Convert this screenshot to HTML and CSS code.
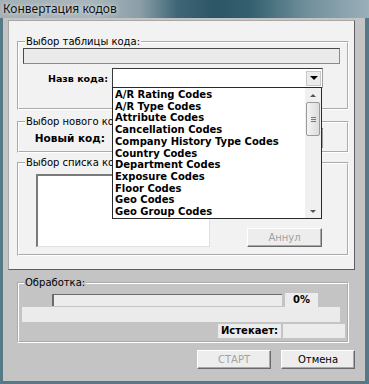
FILE: index.html
```html
<!DOCTYPE html>
<html lang="ru">
<head>
    <meta charset="UTF-8">
    <meta name="viewport" content="width=device-width, initial-scale=1.0">
    <title>Конвертация кодов</title>
    <link rel="stylesheet" href="styles.css">
</head>
<body>
    <div class="window">
        <div class="titlebar">Конвертация кодов</div>
        <div class="client">
            <div class="top-panel">
                <fieldset class="group group-table">
                    <legend>Выбор таблицы кода:</legend>
                    <div class="field-wide"></div>
                    <div class="row">
                        <label class="row-label label-name">Назв кода:</label>
                        <div class="combo"><span class="combo-btn"></span></div>
                    </div>
                </fieldset>
                <fieldset class="group group-new">
                    <legend>Выбор нового кода:</legend>
                    <div class="row">
                        <label class="row-label label-new">Новый код:</label>
                        <div class="combo"><span class="combo-btn"></span></div>
                    </div>
                </fieldset>
                <fieldset class="group group-list">
                    <legend>Выбор списка кодов:</legend>
                    <div class="list-row">
                        <div class="listbox"></div>
                        <button class="btn btn-cancel" disabled>Аннул</button>
                    </div>
                </fieldset>
            </div>

            <fieldset class="process">
                <legend>Обработка:</legend>
                <div class="progress-row">
                    <div class="progress"></div>
                    <div class="percent">0%</div>
                </div>
                <div class="status"></div>
                <div class="expire-row">
                    <div class="expire-label">Истекает:</div>
                    <div class="expire-value"></div>
                </div>
            </fieldset>

            <div class="actions">
                <button class="btn" disabled>СТАРТ</button>
                <button class="btn">Отмена</button>
            </div>
        </div>

        <!-- открытый список кодов -->
        <div class="dropdown">
            <ul class="options">
                <li>A/R Rating Codes</li>
                <li>A/R Type Codes</li>
                <li>Attribute Codes</li>
                <li>Cancellation Codes</li>
                <li>Company History Type Codes</li>
                <li>Country Codes</li>
                <li>Department Codes</li>
                <li>Exposure Codes</li>
                <li>Floor Codes</li>
                <li>Geo Codes</li>
                <li>Geo Group Codes</li>
            </ul>
            <div class="scrollbar">
                <span class="arrow arrow-up"></span>
                <span class="thumb"><span class="grip"></span></span>
                <span class="track"></span>
                <span class="arrow arrow-down"></span>
            </div>
        </div>
    </div>
</body>
</html>
```

FILE: styles.css
```css
/* окно диалога */
body {
    margin: 0;
    font-family: "DejaVu Sans", Verdana, sans-serif;
    font-size: 10px;
    color: #000;
    background: #fff;
}

.window {
    position: relative;
    width: 369px;
    height: 384px;
    display: flex;
    flex-direction: column;
    overflow: hidden;
}

.titlebar {
    height: 18px;
    line-height: 18px;
    padding-left: 3px;
    font-family: "Noto Sans", sans-serif;
    font-size: 12px;
    color: #111;
    text-shadow: 0 0 4px rgba(255, 255, 255, 0.9);
    background: linear-gradient(90deg, #a3b1b7 0%, #a9b6bc 25%, #8a9ea7 38%, #3f6676 48%, #2c5566 58%, #34606f 68%, #6d8c99 82%, #9bb0b9 100%);
}

.client {
    flex: 1;
    display: flex;
    flex-direction: column;
    background: #c4c4c4;
    border: solid #567987;
    border-width: 0 4px 3px 3px;
    padding: 2px 10px 0 5px;
}

/* верхняя панель */
.top-panel {
    background: #f2f2f2;
    border: 1px solid;
    border-color: #a8a8a8 #5e5e5e #5e5e5e #a8a8a8;
    padding: 14px 5px 13px 8px;
}

.group {
    margin: 0;
    padding: 0 7px 20px 4px;
    border: 2px groove #fff;
    min-width: 0;
}

.group legend,
.process legend {
    margin-left: 2px;
    padding: 0 1px;
    line-height: 13px;
}

.group-new {
    margin-top: 5px;
    padding-bottom: 3px;
}

.group-list {
    margin-top: 3px;
    padding-bottom: 7px;
}

.field-wide {
    height: 14px;
    background: #ebebeb;
    border: 1px solid;
    border-color: #4a4a4a #8a8a8a #8a8a8a #4a4a4a;
}

.row {
    display: flex;
    align-items: center;
    gap: 4px;
    margin-top: 4px;
}

.group-new .row {
    margin-top: 0;
}

.row-label {
    width: 85px;
    text-align: right;
    font-weight: bold;
}

.label-name {
    font-size: 9.5px;
}

.label-new {
    width: 82px;
    padding-right: 3px;
    font-size: 10.5px;
}

.combo {
    position: relative;
    width: 208px;
    height: 18px;
    background: #fff;
    border: 1px solid;
    border-color: #3a3a3a #a0a0a0 #a0a0a0 #3a3a3a;
    display: flex;
    justify-content: flex-end;
    align-items: center;
    padding-right: 1px;
}

.combo-btn {
    width: 15px;
    height: 15px;
    background: #ececec;
    border: 1px solid #c8c8c8;
    box-sizing: border-box;
    display: flex;
    align-items: center;
    justify-content: center;
}

.combo-btn::after {
    content: "";
    border-left: 4px solid transparent;
    border-right: 4px solid transparent;
    border-top: 4px solid #000;
}

.list-row {
    display: flex;
    align-items: flex-end;
    margin: 5px 0 0 13px;
}

.listbox {
    width: 171px;
    height: 70px;
    align-self: flex-start;
    background: #fff;
    border-style: solid;
    border-width: 2px 1px 1px 2px;
    border-color: #7a7a7a #e0e0e0 #e0e0e0 #7a7a7a;
}

/* кнопки */
.btn {
    height: 19px;
    padding: 0;
    font-family: "DejaVu Sans", Verdana, sans-serif;
    font-size: 10px;
    color: #000;
    background: #ededed;
    border: 1px solid;
    border-color: #fff #6a6a6a #6a6a6a #fff;
    box-shadow: inset -1px -1px 0 #a8a8a8;
}

.btn:disabled {
    color: #a2a2a2;
}

.btn-cancel {
    width: 75px;
    margin-left: 37px;
}

/* обработка */
.process {
    margin: 6px 6px 0 9px;
    padding: 0 2px 3px 3px;
    border: 2px groove #fff;
    min-width: 0;
}

.progress-row {
    display: flex;
    align-items: center;
    gap: 3px;
    margin-top: 4px;
    height: 14px;
}

.progress {
    width: 228px;
    height: 11px;
    margin-left: 30px;
    background: #ececec;
    border-style: solid;
    border-width: 1px 0 0 2px;
    border-color: #6b6b6b;
}

.percent {
    width: 33px;
    height: 14px;
    line-height: 14px;
    text-align: center;
    font-weight: bold;
    background: #ececec;
}

.status {
    width: 318px;
    height: 15px;
    background: #ebebeb;
}

.expire-row {
    display: flex;
    justify-content: flex-end;
    gap: 2px;
    margin-top: 2px;
}

.expire-label {
    width: 63px;
    height: 14px;
    line-height: 14px;
    text-align: center;
    font-weight: bold;
    background: #ececec;
}

.expire-value {
    width: 62px;
    height: 14px;
    background: #ececec;
}

.actions {
    display: flex;
    justify-content: flex-end;
    gap: 10px;
    margin-top: 7px;
}

.actions .btn {
    width: 74px;
}

/* выпадающий список поверх формы */
.dropdown {
    position: absolute;
    left: 112px;
    top: 87px;
    width: 208px;
    height: 130px;
    background: #fff;
    border: 1px solid #2a2a2a;
    display: flex;
}

.options {
    flex: 1;
    list-style: none;
    margin: 0;
    padding: 1px 0 0 2px;
    font-weight: bold;
    font-size: 10px;
    line-height: 11.7px;
    white-space: nowrap;
}

.scrollbar {
    width: 16px;
    display: flex;
    flex-direction: column;
    align-items: center;
    background: #f0f0f0;
}

.arrow {
    height: 14px;
    width: 16px;
    display: flex;
    align-items: center;
    justify-content: center;
}

.arrow::after {
    content: "";
    border-left: 3px solid transparent;
    border-right: 3px solid transparent;
}

.arrow-up::after {
    border-bottom: 3px solid #555;
}

.arrow-down::after {
    border-top: 3px solid #555;
}

.thumb {
    width: 14px;
    height: 34px;
    box-sizing: border-box;
    border: 1px solid #9a9a9a;
    border-radius: 2px;
    background: linear-gradient(90deg, #f4f4f4, #dcdcdc);
    display: flex;
    align-items: center;
    justify-content: center;
}

.grip {
    width: 5px;
    height: 5px;
    border-top: 1px solid #777;
    border-bottom: 1px solid #777;
    box-sizing: border-box;
    position: relative;
}

.grip::after {
    content: "";
    position: absolute;
    left: 0;
    right: 0;
    top: 1px;
    border-top: 1px solid #777;
}

.track {
    flex: 1;
}
```
